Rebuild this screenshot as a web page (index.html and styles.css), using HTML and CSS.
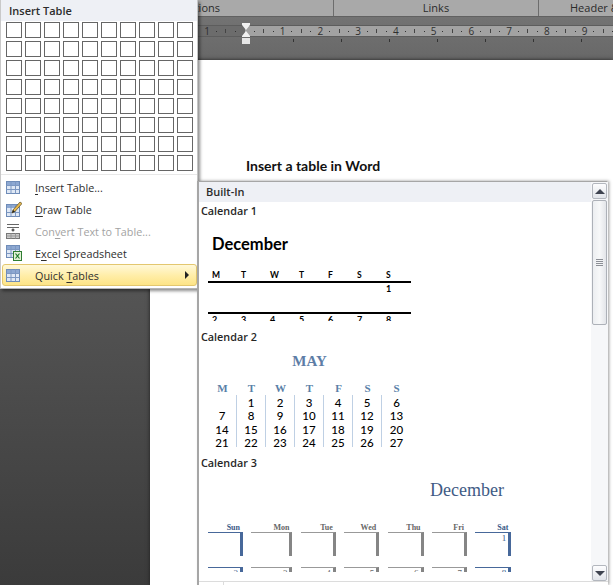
FILE: index.html
```html
<!DOCTYPE html>
<html lang="en">
<head>
<meta charset="utf-8">
<title>Insert a table in Word</title>
<link rel="stylesheet" href="styles.css">
</head>
<body>
<svg class="defs" width="0" height="0" aria-hidden="true">
  <symbol id="tbl" viewBox="0 0 14 13">
    <rect x=".5" y=".5" width="13" height="12" fill="#dfe8f5" stroke="#6f8cb8"/>
    <rect x="1" y="1" width="12" height="3" fill="#8da8d2"/>
    <path d="M.5 4.5h13M.5 8.5h13M5 .5v12M9.500 .5v12" stroke="#7d98c2" fill="none"/>
  </symbol>
</svg>
<div class="window">
  <div class="tabs">
    <div class="tab tab-first">Options</div>
    <div class="tab tab-links">Links</div>
    <div class="tab tab-header">Header &amp; Footer</div>
  </div>
  <div class="band">
    <div class="ruler">
      <b class="num">1</b><i class="dot"></i><i class="tick"></i><i class="dot"></i>
      <b class="num"></b><i class="dot"></i><i class="tick"></i><i class="dot"></i>
      <b class="num">1</b><i class="dot"></i><i class="tick"></i><i class="dot"></i>
      <b class="num">2</b><i class="dot"></i><i class="tick"></i><i class="dot"></i>
      <b class="num">3</b><i class="dot"></i><i class="tick"></i><i class="dot"></i>
      <b class="num">4</b><i class="dot"></i><i class="tick"></i><i class="dot"></i>
      <b class="num">5</b><i class="dot"></i><i class="tick"></i><i class="dot"></i>
      <b class="num">6</b><i class="dot"></i><i class="tick"></i><i class="dot"></i>
      <b class="num">7</b><i class="dot"></i><i class="tick"></i><i class="dot"></i>
      <b class="num">8</b><i class="dot"></i><i class="tick"></i><i class="dot"></i>
      <b class="num">9</b><i class="dot"></i><i class="tick"></i><i class="dot"></i>
    </div>
    <div class="stops"></div>
    <svg class="indent" width="8" height="21" viewBox="0 0 8 21" aria-hidden="true">
      <path d="M0 0h8v2L4 7 0 2zM4 8l4 5v1H0v-1z" fill="#f1f1f1"/>
      <rect y="15" width="8" height="6" fill="#e6e6e6"/>
    </svg>
  </div>
  <div class="doc">
    <div class="page">
      <h1 class="doc-title">Insert a table in Word</h1>
    </div>
  </div>
</div>

<div class="menu">
  <div class="menu-head">Insert Table</div>
  <div class="picker">
    <i></i><i></i><i></i><i></i><i></i><i></i><i></i><i></i><i></i><i></i>
    <i></i><i></i><i></i><i></i><i></i><i></i><i></i><i></i><i></i><i></i>
    <i></i><i></i><i></i><i></i><i></i><i></i><i></i><i></i><i></i><i></i>
    <i></i><i></i><i></i><i></i><i></i><i></i><i></i><i></i><i></i><i></i>
    <i></i><i></i><i></i><i></i><i></i><i></i><i></i><i></i><i></i><i></i>
    <i></i><i></i><i></i><i></i><i></i><i></i><i></i><i></i><i></i><i></i>
    <i></i><i></i><i></i><i></i><i></i><i></i><i></i><i></i><i></i><i></i>
    <i></i><i></i><i></i><i></i><i></i><i></i><i></i><i></i><i></i><i></i>
  </div>
  <div class="menu-items">
    <div class="item">
      <span class="ico"><svg width="14" height="13"><use href="#tbl"/></svg></span>
      <span><u>I</u>nsert Table...</span>
    </div>
    <div class="item">
      <span class="ico"><svg width="16" height="16" viewBox="0 0 16 16">
        <rect x=".5" y="3.500" width="13" height="12" fill="#dfe8f5" stroke="#6f8cb8"/>
        <rect x="1" y="4" width="12" height="3" fill="#8da8d2"/>
        <path d="M.5 11.500h13M5 3.500v12M9.500 3.500v12" stroke="#7d98c2" fill="none"/>
        <path d="M6 12l1-3 7-8 2 1.500-7 8z" fill="#e8b84e" stroke="#6b5a2d" stroke-width=".8"/>
        <path d="M6 12l1-3 2 1.500z" fill="#222"/>
      </svg></span>
      <span><u>D</u>raw Table</span>
    </div>
    <div class="item item-off">
      <span class="ico"><svg width="14" height="15" viewBox="0 0 14 15">
        <path d="M1 .5h12M1 3.500h12" stroke="#666" fill="none"/>
        <path d="M7 4.500v3M5.500 6h3" stroke="#222" fill="none"/>
        <rect x=".5" y="9.500" width="13" height="5" fill="#ccc" stroke="#777"/>
        <path d="M5 9.500v5M9.500 9.500v5M.5 12h13" stroke="#999" fill="none"/>
      </svg></span>
      <span>Con<u>v</u>ert Text to Table...</span>
    </div>
    <div class="item">
      <span class="ico"><svg width="16" height="16" viewBox="0 0 16 16">
        <rect x=".5" y=".5" width="13" height="12" fill="#dfe8f5" stroke="#6f8cb8"/>
        <rect x="1" y="1" width="12" height="3" fill="#8da8d2"/>
        <path d="M.5 4.500h13M.5 8.500h13M5 .5v12M9.500 .5v12" stroke="#7d98c2" fill="none"/>
        <rect x="7.500" y="6.500" width="8" height="9" fill="#e3f2d8" stroke="#2f7d32"/>
        <path d="M9.500 8.500l4 5M13.500 8.500l-4 5" stroke="#1e7b2c" stroke-width="1.200" fill="none"/>
      </svg></span>
      <span>E<u>x</u>cel Spreadsheet</span>
    </div>
    <div class="item item-on">
      <span class="ico"><svg width="14" height="13"><use href="#tbl"/></svg></span>
      <span>Quick <u>T</u>ables</span>
      <i class="caret"></i>
    </div>
  </div>
</div>

<div class="gallery">
  <div class="gallery-main">
    <div class="gallery-head">Built-In</div>
    <div class="gallery-list">
      <section class="entry">
        <h2 class="entry-name">Calendar 1</h2>
        <div class="preview cal1">
          <div class="cal1-month">December</div>
          <div class="cal1-grid cal1-days"><span>M</span><span>T</span><span>W</span><span>T</span><span>F</span><span>S</span><span>S</span></div>
          <div class="cal1-grid cal1-row"><span></span><span></span><span></span><span></span><span></span><span></span><span>1</span></div>
          <div class="cal1-grid cal1-row"><span>2</span><span>3</span><span>4</span><span>5</span><span>6</span><span>7</span><span>8</span></div>
        </div>
      </section>
      <section class="entry">
        <h2 class="entry-name">Calendar 2</h2>
        <div class="preview cal2">
          <div class="cal2-month">MAY</div>
          <div class="cal2-grid">
            <b>M</b><b>T</b><b>W</b><b>T</b><b>F</b><b>S</b><b>S</b>
            <span></span><span>1</span><span>2</span><span>3</span><span>4</span><span>5</span><span>6</span>
            <span>7</span><span>8</span><span>9</span><span>10</span><span>11</span><span>12</span><span>13</span>
            <span>14</span><span>15</span><span>16</span><span>17</span><span>18</span><span>19</span><span>20</span>
            <span>21</span><span>22</span><span>23</span><span>24</span><span>25</span><span>26</span><span>27</span>
          </div>
        </div>
      </section>
      <section class="entry">
        <h2 class="entry-name">Calendar 3</h2>
        <div class="preview cal3">
          <div class="cal3-month">December</div>
          <div class="cal3-grid">
            <b class="end">Sun</b><b>Mon</b><b>Tue</b><b>Wed</b><b>Thu</b><b>Fri</b><b class="end">Sat</b>
            <span class="end"></span><span></span><span></span><span></span><span></span><span></span><span class="end">1</span>
            <span class="end">2</span><span>3</span><span>4</span><span>5</span><span>6</span><span>7</span><span class="end">8</span>
          </div>
        </div>
      </section>
    </div>
  </div>
  <div class="scroll">
    <div class="sbtn sbtn-up"><i></i></div>
    <div class="thumb"><i></i><i></i><i></i><i></i></div>
    <div class="track"></div>
    <div class="sbtn sbtn-down"><i></i></div>
  </div>
  <div class="gallery-foot"><i></i></div>
</div>
</body>
</html>
```
FILE: styles.css
```css
* { box-sizing: border-box; }
html, body { margin: 0; padding: 0; }
body {
  position: relative;
  width: 613px;
  height: 585px;
  overflow: hidden;
  font-family: "Open Sans", "Liberation Sans", sans-serif;
  background: #fff;
}
.defs { position: absolute; }

/* window behind the menus */
.window {
  display: flex;
  flex-direction: column;
  height: 585px;
  background: linear-gradient(#777 0, #686868 60px, #3b3b3b 585px);
}
.tabs {
  display: flex;
  height: 17px;
  flex: none;
  background: #a9a9a9;
  border-bottom: 1px solid #616161;
  font-size: 11px;
  line-height: 15px;
  color: #2b2b2b;
  white-space: nowrap;
  overflow: hidden;
}
.tab { border-right: 1px solid #6d6d6d; flex: none; }
.tab-first { width: 334px; padding-right: 113px; text-align: right; }
.tab-links { width: 205px; text-align: center; }
.tab-header { width: 80px; padding-left: 31px; border-right: 0; }

.band { position: relative; height: 43px; flex: none; }
.ruler {
  display: flex;
  width: 415px;
  height: 12px;
  margin: 8px 0 0 198px;
  padding-left: 4.300px;
  background: linear-gradient(to right, #6c6c6c 47px, #a2a2a2 47px);
  border-top: 1px solid #5d5d5d;
  border-bottom: 1px solid #5d5d5d;
}
.ruler > * {
  flex: none;
  width: 9.450px;
  display: flex;
  align-items: center;
  justify-content: center;
  font: 400 10px/10px "Open Sans", sans-serif;
  color: #2f2f2f;
}
.dot::after { content: ""; width: 1px; height: 1px; background: #333; }
.tick::after { content: ""; width: 1px; height: 4px; background: #444; }
.stops {
  height: 3px;
  margin: 2px 0 0 197px;
  padding-left: 96px;
  background-image: repeating-linear-gradient(to right, #333 0 1px, transparent 1px 48px);
  background-origin: content-box;
  background-clip: content-box;
}
.indent { position: absolute; left: 242px; top: 6px; }

.doc { flex: 1; display: flex; padding-left: 150px; min-height: 0; }
.page {
  flex: 1;
  background: #fff;
  box-shadow: 0 0 4px #1e1e1e;
  padding: 97px 0 0 96px;
}
.doc-title {
  margin: 0;
  font: 700 14px/18px Lato, sans-serif;
  color: #111;
}

/* insert table menu */
.menu {
  position: absolute;
  left: 0;
  top: 0;
  width: 198px;
  height: 289px;
  background: #fff;
  border-left: 1px solid #c9c9c9;
  border-right: 1px solid #c4c4c4;
  border-bottom: 1px solid #b5b5b5;
  box-shadow: 2px 2px 3px rgba(0, 0, 0, .45);
}
.menu-head {
  height: 21px;
  padding-left: 8px;
  background: #eef0f5;
  font-size: 11px;
  font-weight: 600;
  line-height: 22px;
  color: #2c2c2c;
}
.picker {
  display: grid;
  grid-template-columns: repeat(10, 16px);
  grid-auto-rows: 16px;
  gap: 3px;
  padding: 1px 0 0 5px;
  height: 154px;
  border-bottom: 1px solid #e8e8e8;
}
.picker i { display: block; background: #fff; border: 1px solid #666; }
.menu-items { padding: 1px 0 0 1px; }
.item {
  display: flex;
  align-items: center;
  height: 22px;
  font-size: 10.800px;
  color: #2e2e2e;
  white-space: nowrap;
}
.item u { text-underline-offset: 2px; }
.ico { flex: none; width: 33px; padding-left: 4px; display: flex; align-items: center; }
.item-off { color: #a3a3a3; }
.item-on {
  position: relative;
  width: 195px;
  height: 22px;
  background: linear-gradient(#fff8d8, #ffeda6 55%, #fde487);
  border: 1px solid #e3c76f;
  border-radius: 3px;
}
.item-on .ico { width: 32px; padding-left: 3px; }
.caret {
  position: absolute;
  right: 7px;
  top: 6px;
  border-left: 4px solid #222;
  border-top: 4px solid transparent;
  border-bottom: 4px solid transparent;
}

/* quick tables gallery */
.gallery {
  position: absolute;
  left: 197px;
  top: 181px;
  width: 410px;
  height: 404px;
  display: grid;
  grid-template-columns: 392px 17px;
  grid-template-rows: 399px 4px;
  background: #fff;
  border-left: 2px solid #a6a6a6;
  border-top: 1px solid #a6a6a6;
  box-shadow: 2px 0 3px rgba(0, 0, 0, .4);
}
.gallery-main { min-width: 0; overflow: hidden; }
.gallery-head {
  height: 20px;
  padding-left: 7px;
  background: #eef0f5;
  font-size: 11px;
  font-weight: 600;
  line-height: 20px;
  color: #2c2c2c;
}
.gallery-list { height: 371px; overflow: hidden; }
.entry { height: 126px; }
.entry-name {
  margin: 0;
  height: 16px;
  padding-left: 2px;
  font-size: 10.800px;
  font-weight: 600;
  line-height: 17px;
  color: #262626;
}
.preview { overflow: hidden; padding-left: 9px; color: #000; }

.cal1 { height: 103px; font-family: Lato, sans-serif; }
.cal1-month { margin: 16px 0 0 4px; font-size: 16.500px; font-weight: 700; line-height: 20px; }
.cal1-grid { display: grid; grid-template-columns: repeat(7, 29px); width: 203px; }
.cal1-grid span { padding-left: 4px; }
.cal1-days { margin-top: 15px; height: 12px; font-size: 8.500px; font-weight: 700; line-height: 12px; }
.cal1-row {
  height: 32px;
  border-top: 2px solid #000;
  font-size: 9px;
  font-weight: 700;
  line-height: 12px;
}
.cal1-row + .cal1-row { height: 20px; margin-top: -1px; }

.cal2 { height: 103px; font-family: Lato, sans-serif; }
.cal2-month {
  margin-top: 7px;
  width: 203px;
  font: 700 15px/20px "Liberation Serif", serif;
  color: #5d7da6;
  text-align: center;
}
.cal2-grid {
  display: grid;
  grid-template-columns: repeat(7, 29px);
  grid-auto-rows: 13.500px;
  margin-top: 10px;
  text-align: center;
  font-size: 11.500px;
  line-height: 13.500px;
  font-weight: 500;
}
.cal2-grid b {
  height: 14px;
  font: 700 11px/14px "Liberation Serif", serif;
  color: #5a7fa8;
}
.cal2-grid span { padding-top: 1px; border-right: 1px solid #bfd0e4; }
.cal2-grid span:nth-child(7n) { border-right: 0; }

.cal3 { height: 102px; font-family: "Liberation Serif", serif; }
.cal3-month {
  margin: 9px 0 0 222px;
  font-size: 18px;
  line-height: 22px;
  color: #3f5b85;
}
.cal3-grid {
  display: grid;
  grid-template-columns: 35px 41px 35px 35px 36px 35px 36px;
  column-gap: 8.400px;
  grid-template-rows: 9px 35px 24px;
  margin-top: 22px;
  text-align: right;
}
.cal3-grid b { padding-right: 3px; font-size: 8px; line-height: 9px; color: #666; }
.cal3-grid b.end { color: #3c5a87; }
.cal3-grid span {
  height: 24px;
  padding-right: 2px;
  border-top: 1px solid #999;
  border-right: 3px solid #858585;
  font-size: 9px;
  line-height: 11px;
  color: #666;
}
.cal3-grid span.end { border-top-color: #47689a; border-right-color: #47689a; color: #3c5a87; }

.scroll { display: flex; flex-direction: column; padding: 1px 1px 0; background: #f6f7f9; }
.sbtn {
  flex: none;
  height: 16px;
  display: flex;
  align-items: center;
  justify-content: center;
  background: linear-gradient(#fdfdfe, #e2e5ea);
  border: 1px solid #b3b7be;
  border-radius: 2px;
}
.sbtn i { border-left: 5px solid transparent; border-right: 5px solid transparent; }
.sbtn-up i { border-bottom: 5px solid #3f4450; }
.sbtn-down i { border-top: 5px solid #3f4450; }
.thumb {
  flex: none;
  height: 125px;
  margin-top: 1px;
  display: flex;
  flex-direction: column;
  align-items: center;
  justify-content: center;
  gap: 1px;
  background: linear-gradient(to right, #eceef1, #f7f8f9 50%, #e3e5e9);
  border: 1px solid #adb1b8;
  border-radius: 2px;
}
.thumb i { width: 7px; height: 1px; background: #8c8f96; }
.track { flex: 1; }
.gallery-foot {
  grid-column: 1 / -1;
  border-top: 1px solid #dcdcdc;
  padding-left: 24px;
  background: #fff;
}
.gallery-foot i { display: block; width: 1px; height: 4px; background: #dcdcdc; }
```
